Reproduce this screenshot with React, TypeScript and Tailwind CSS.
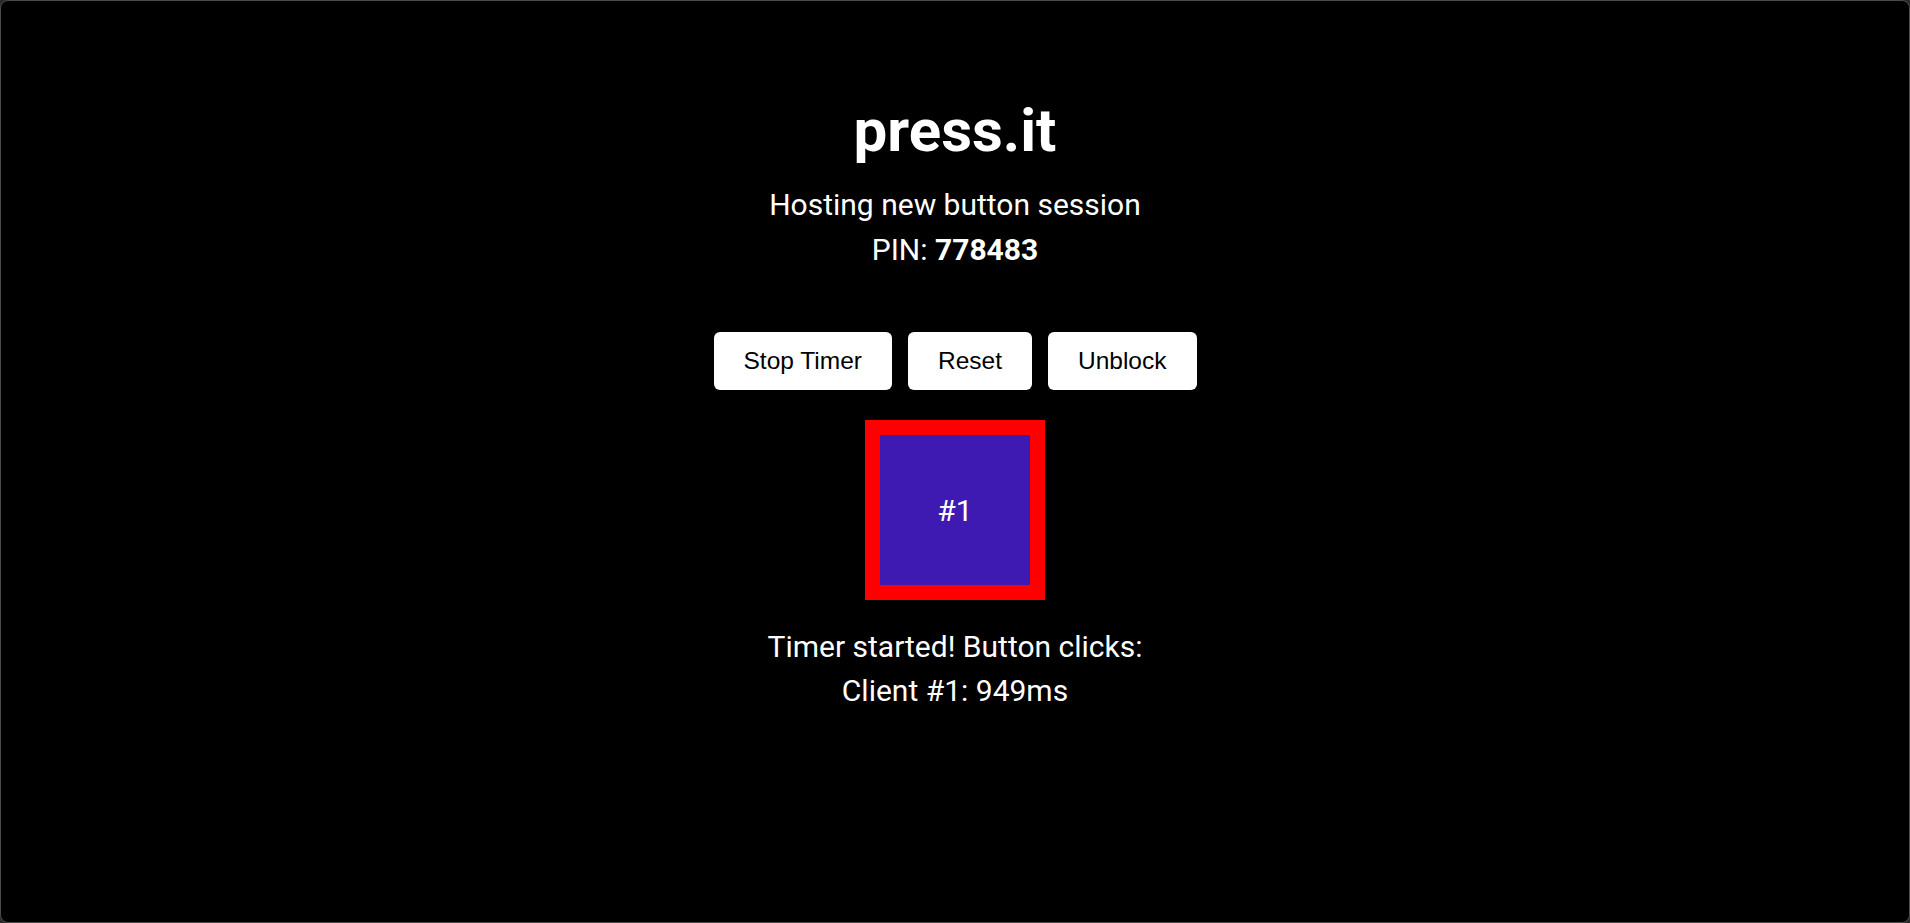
const buttons = ["Stop Timer", "Reset", "Unblock"];

const clicks = [{ client: 1, ms: 949 }];

export default function App() {
  return (
    <div className="h-screen w-full bg-[#2b2b2b]">
      <div
        className="h-full w-full rounded-[8px] border border-[#4b4b4b] bg-black text-white flex flex-col items-center pt-[95px]"
        style={{ fontFamily: "Roboto, 'Noto Sans', sans-serif" }}
      >
        {/* Header */}
        <h1 className="text-[60px] leading-[70px] font-bold">press.it</h1>
        <div className="mt-[16px] text-[30px] leading-[45px] text-center">
          <p>Hosting new button session</p>
          <p>
            PIN: <span className="font-bold">778483</span>
          </p>
        </div>

        {/* Controls */}
        <div className="mt-[60px] flex gap-[16px]">
          {buttons.map((label) => (
            <button
              key={label}
              className="h-[58px] px-[30px] rounded-[6px] bg-white text-black text-[24.5px] leading-[28px]"
              style={{ fontFamily: "'Liberation Sans', Arial, sans-serif" }}
            >
              {label}
            </button>
          ))}
        </div>

        {/* Client box */}
        <div className="mt-[30px] w-[180px] h-[180px] border-[15px] border-[#ff0000] bg-[#3f1ab2] flex items-center justify-center text-[30px]">
          #1
        </div>

        {/* Results */}
        <div className="mt-[25px] text-[30px] leading-[44px] text-center">
          <p>Timer started! Button clicks:</p>
          {clicks.map((c) => (
            <p key={c.client}>
              Client #{c.client}: {c.ms}ms
            </p>
          ))}
        </div>
      </div>
    </div>
  );
}
